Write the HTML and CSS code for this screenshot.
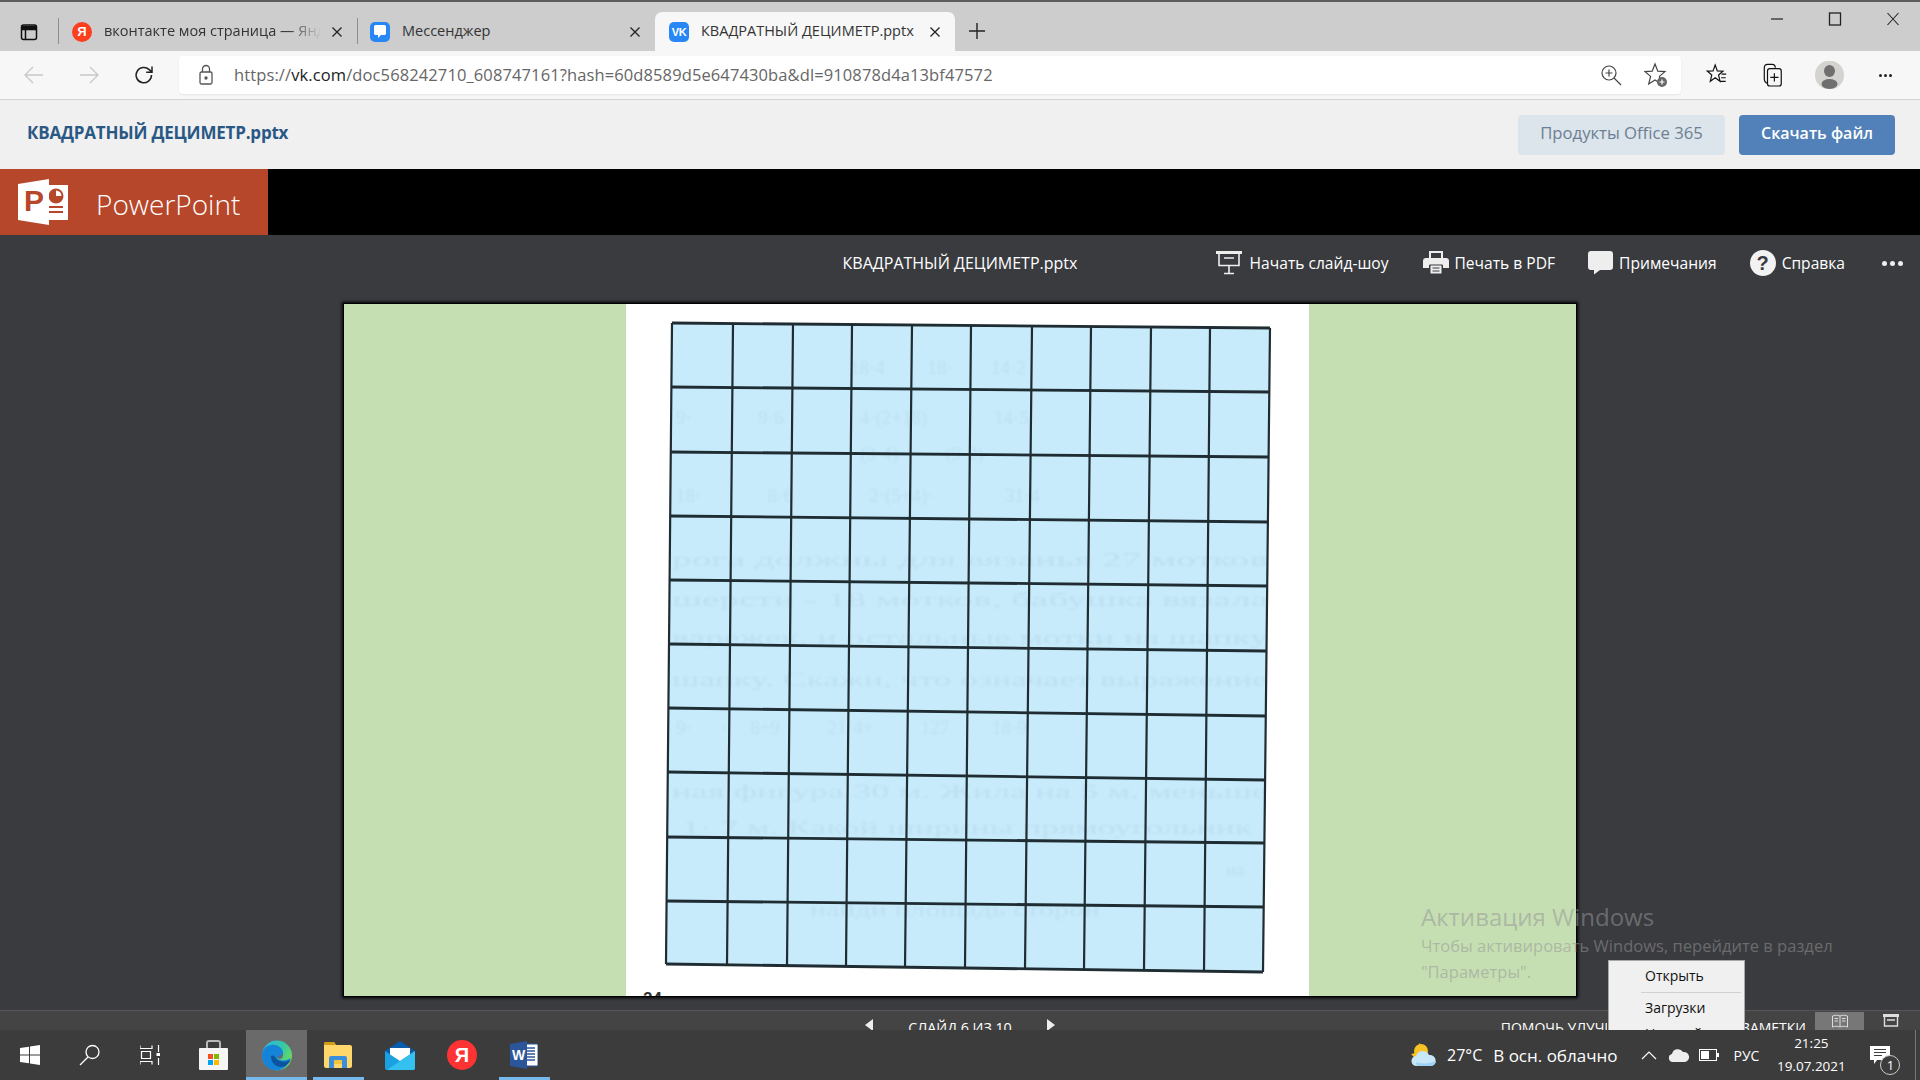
FILE: index.html
```html
<!DOCTYPE html>
<html lang="ru">
<head>
<meta charset="utf-8">
<title>КВАДРАТНЫЙ ДЕЦИМЕТР.pptx</title>
<link rel="stylesheet" href="styles.css">
</head>
<body>
<div class="window">
  <header class="tabbar">
    <div class="tab-side">
      <svg width="20" height="20" viewBox="0 0 20 20" fill="none" stroke="#111" stroke-width="1.5"><rect x="2.5" y="3" width="15" height="14.5" rx="2"/><path d="M3 4.5h14v3H3z" fill="#111"/><path d="M6.5 7v10"/></svg>
    </div>
    <div class="tab tab-first">
      <span class="fav fav-ya">Я</span>
      <span class="tab-title fade">вконтакте моя страница — Яндекс</span>
      <svg class="tab-x" width="12" height="12" viewBox="0 0 12 12" stroke="#222" stroke-width="1.3"><path d="M1.5 1.5l9 9M10.5 1.5l-9 9"/></svg>
    </div>
    <div class="tab tab-second">
      <span class="fav fav-msg"><svg width="14" height="15" viewBox="0 0 14 15" fill="#fff"><path d="M2.5 1h9A1.5 1.5 0 0 1 13 2.5v7A1.5 1.5 0 0 1 11.500 11H8l-3 3v-3H2.500A1.500 1.500 0 0 1 1 9.500v-7A1.500 1.500 0 0 1 2.500 1z"/></svg></span>
      <span class="tab-title">Мессенджер</span>
      <svg class="tab-x" width="12" height="12" viewBox="0 0 12 12" stroke="#222" stroke-width="1.3"><path d="M1.5 1.5l9 9M10.5 1.5l-9 9"/></svg>
    </div>
    <div class="tab tab-active">
      <span class="fav fav-vk">VK</span>
      <span class="tab-title">КВАДРАТНЫЙ ДЕЦИМЕТР.pptx</span>
      <svg class="tab-x" width="12" height="12" viewBox="0 0 12 12" stroke="#222" stroke-width="1.3"><path d="M1.5 1.5l9 9M10.5 1.5l-9 9"/></svg>
    </div>
    <button class="tab-new"><svg width="18" height="18" viewBox="0 0 18 18" stroke="#222" stroke-width="1.4"><path d="M9 1v16M1 9h16"/></svg></button>
    <div class="win-controls">
      <svg width="14" height="14" viewBox="0 0 14 14" stroke="#222" stroke-width="1.2"><path d="M1 7h12"/></svg>
      <svg width="14" height="14" viewBox="0 0 14 14" stroke="#222" stroke-width="1.3" fill="none"><rect x="1.500" y="1" width="11" height="12"/></svg>
      <svg width="14" height="14" viewBox="0 0 14 14" stroke="#222" stroke-width="1.1"><path d="M1.500 1l11 12M12.500 1l-11 12"/></svg>
    </div>
  </header>

  <nav class="toolbar">
    <div class="nav-btn"><svg width="22" height="22" viewBox="0 0 22 22" fill="none" stroke="#c9c9c9" stroke-width="1.400"><path d="M20 11H2M10 3l-8 8 8 8"/></svg></div>
    <div class="nav-btn"><svg width="22" height="22" viewBox="0 0 22 22" fill="none" stroke="#c9c9c9" stroke-width="1.400"><path d="M2 11h18M12 3l8 8-8 8"/></svg></div>
    <div class="nav-btn"><svg width="22" height="22" viewBox="0 0 22 22" fill="none" stroke="#222" stroke-width="1.500"><path d="M18.500 11a7.700 7.700 0 1 1-2.300-5.400L19 8.300M19 2.500v5.800h-5.800"/></svg></div>
    <div class="address">
      <svg class="lock" width="20" height="22" viewBox="0 0 20 22" fill="none" stroke="#555" stroke-width="1.300"><rect x="4" y="8" width="12" height="12" rx="1.500"/><path d="M6.500 8V5a3.500 3.500 0 0 1 7 0v3"/><circle cx="10" cy="14" r="1" fill="#555"/></svg>
      <span class="url">https://<b>vk.com</b>/doc568242710_608747161?hash=60d8589d5e647430ba&amp;dl=910878d4a13bf47572</span>
      <span class="grow"></span>
      <svg class="addr-icon" width="24" height="24" viewBox="0 0 24 24" fill="none" stroke="#444" stroke-width="1.200"><circle cx="10" cy="10" r="7"/><path d="M15 15l7 7M10 6.500v7M6.500 10h7"/></svg>
      <svg class="addr-icon addr-star" width="24" height="26" viewBox="0 0 24 26" fill="none" stroke="#444" stroke-width="1.200"><path d="M11 2l2.800 7.200 7.200.4-5.600 4.800 1.900 7.500L11 18l-6.300 3.900 1.900-7.500L1 9.600l7.200-.4z"/><circle cx="18" cy="20" r="5" fill="#666" stroke="none"/><path d="M18 17.500v5M15.500 20h5" stroke="#fff"/></svg>
    </div>
    <div class="tool-icons">
      <div class="tool-btn"><svg width="22" height="24" viewBox="0 0 24 26" fill="none" stroke="#111" stroke-width="1.300"><path d="M10 2l2.300 6.500 6.200.3-4.800 4.200 1.600 6.800L10 16l-5.300 3.800 1.600-6.800L1.500 8.800l6.200-.3z"/><path d="M17 12h5M16.500 16h5M15.500 20h6"/></svg></div>
      <div class="tool-btn"><svg width="22" height="26" viewBox="0 0 24 28" fill="none" stroke="#111" stroke-width="1.300"><path d="M6 23C3 22 2.500 20 2.500 18V6c0-2 1-3.500 3.500-3.500h5c2 0 3.500 1 3.500 3.500"/><rect x="6" y="7" width="15" height="19" rx="2.500" fill="#f7f7f7"/><path d="M13.500 12v9M9 16.500h9"/></svg></div>
      <div class="tool-btn"><span class="avatar"><svg width="29" height="28" viewBox="0 0 29 28"><circle cx="14.500" cy="14" r="14.500" fill="#d4d3cf"/><ellipse cx="14.500" cy="10" rx="5.500" ry="6" fill="#6f6f6f"/><ellipse cx="14.500" cy="23" rx="8" ry="5" fill="#6f6f6f"/></svg></span></div>
      <div class="tool-btn tool-dots"><i></i><i></i><i></i></div>
    </div>
  </nav>

  <section class="doc-head">
    <h1 class="doc-name">КВАДРАТНЫЙ ДЕЦИМЕТР.pptx</h1>
    <div class="doc-actions">
      <a class="btn btn-light">Продукты Office 365</a>
      <a class="btn btn-blue">Скачать файл</a>
    </div>
  </section>

  <section class="brand">
    <div class="brand-tile">
      <svg class="brand-logo" width="50" height="46" viewBox="0 0 50 46">
        <path d="M21 6h29v35H21z" fill="#fff"/>
        <circle cx="38" cy="17" r="7.500" fill="#b7472a"/>
        <path d="M38 11.500a5.500 5.500 0 0 1 5.500 5.500H38z" fill="#fff"/>
        <path d="M27 27h18v2H27zM27 32h18v2H27z" fill="#b7472a"/>
        <path d="M0 5l31-5v46L0 41z" fill="#fff"/>
        <text x="6" y="32" class="logo-p">P</text>
      </svg>
      <span class="brand-name">PowerPoint</span>
    </div>
  </section>

  <section class="ppt-bar">
    <span></span>
    <span class="ppt-title">КВАДРАТНЫЙ ДЕЦИМЕТР.pptx</span>
    <div class="ppt-actions">
      <div class="ppt-item ppt-first"><svg width="26" height="24" viewBox="0 0 26 24" fill="none" stroke="#eee" stroke-width="1.600"><path d="M0 1.500h26" stroke-width="3"/><path d="M3 2.500v12h20v-12M8 7h10M13 15v7M8 22.500h10"/></svg><span>Начать слайд-шоу</span></div>
      <div class="ppt-item"><svg width="26" height="24" viewBox="0 0 26 24"><rect x="7" y="1" width="12" height="9" fill="none" stroke="#eee" stroke-width="2"/><path d="M3 7h20a3 3 0 0 1 3 3v7h-6v-3H6v3H0v-7a3 3 0 0 1 3-3z" fill="#eee"/><rect x="7" y="14" width="12" height="9" fill="#eee" stroke="#3a3b3f"/><path d="M9.500 17h7M9.500 20h7" stroke="#3a3b3f"/></svg><span>Печать в PDF</span></div>
      <div class="ppt-item"><svg width="25" height="24" viewBox="0 0 25 24" fill="#eee"><path d="M3 0h19a3 3 0 0 1 3 3v13a3 3 0 0 1-3 3H12l-6 4.500V19H3a3 3 0 0 1-3-3V3a3 3 0 0 1 3-3z"/></svg><span>Примечания</span></div>
      <div class="ppt-item"><span class="help">?</span><span>Справка</span></div>
      <div class="ppt-dots"><i></i><i></i><i></i></div>
    </div>
  </section>

  <main class="stage">
    <div class="slide">
      <div class="slide-side slide-left"></div>
      <svg class="slide-page" width="683" height="692" viewBox="626 304 683 692">
        <defs><clipPath id="gridclip"><path d="M672 323L1270 328 1263 972 666 964z"/></clipPath></defs>
        <rect x="626" y="304" width="683" height="692" fill="#fff"/>
        <path d="M672 323L1270 328 1263 972 666 964z" fill="#c8ebfb"/>
        <g clip-path="url(#gridclip)" class="ghost">
          <text x="850" y="374">18·4         18·        14·2</text>
          <text x="676" y="424">9·              9·6                4·(2+18)              14·5</text>
          <text x="860" y="460">(3·4)          (9·2)</text>
          <text x="676" y="502">18·              8·6                2·(5+4)·               31·4</text>
          <text x="672" y="566" textLength="596" lengthAdjust="spacingAndGlyphs">рога должны для вязанья 27 мотков</text>
          <text x="672" y="606" textLength="596" lengthAdjust="spacingAndGlyphs">шерсти - 18 мотков, бабушка вязала</text>
          <text x="672" y="644" textLength="596" lengthAdjust="spacingAndGlyphs">варежек, и остальные мотки на шапку</text>
          <text x="672" y="686" textLength="596" lengthAdjust="spacingAndGlyphs">шапку. Скажи, что означает выражение</text>
          <text x="676" y="734">9·      ·     8+9          21·4+          127         18·9</text>
          <text x="672" y="798" textLength="596" lengthAdjust="spacingAndGlyphs">ная фигура 30 м. Жила на 5 м. меньше</text>
          <text x="682" y="834" textLength="570" lengthAdjust="spacingAndGlyphs">1· 7 м. Какой ширины прямоугольник</text>
          <text x="1226" y="876">на</text>
          <text x="810" y="916" textLength="290" lengthAdjust="spacingAndGlyphs">найди площадь сторон</text>
        </g>
        <g class="grid">
          <path class="grid-v" d="M672 323L666 964M733 324L727 965M793 324L787 966M852 325L846 967M912 325L905 968M971 326L965 968M1032 326L1025 969M1091 327L1084 970M1151 327L1144 970M1210 328L1204 971M1270 328L1263 972"/>
          <path class="grid-h" d="M672 323L1270 328M671 387L1269 392M671 452L1268 457M670 516L1268 522M670 580L1267 586M669 644L1266 651M668 708L1266 716M668 772L1265 780M667 837L1264 843M667 901L1264 907M666 964L1263 972"/>
        </g>
        <text x="643" y="1004" class="page-num">24</text>
      </svg>
      <div class="slide-side slide-right"></div>
    </div>
  </main>

  <footer class="status">
    <span></span>
    <div class="status-pager">
      <svg width="8" height="12" viewBox="0 0 8 12" fill="#eee"><path d="M8 0v12L0 6z"/></svg>
      <span>СЛАЙД 6 ИЗ 10</span>
      <svg width="8" height="12" viewBox="0 0 8 12" fill="#eee"><path d="M0 0v12l8-6z"/></svg>
    </div>
    <div class="status-right">
      <span class="status-help">ПОМОЧЬ УЛУЧШИТЬ OFFICE</span>
      <span class="status-notes">ЗАМЕТКИ</span>
      <span class="view-btn view-on"><svg width="16" height="14" viewBox="0 0 16 14" fill="none" stroke="#ddd"><path d="M8 2C6 1 3 1 .5 2v11c2.500-1 5.500-1 7.500 0 2-1 5-1 7.500 0V2C13 1 10 1 8 2zM8 2v11M2.500 4.500h3.500M2.500 7h3.500M10 4.500h3.500M10 7h3.500"/></svg></span>
      <span class="view-btn"><svg width="16" height="14" viewBox="0 0 16 14" fill="none" stroke="#ddd" stroke-width="1.400"><path d="M0 1.500h16" stroke-width="3"/><path d="M1.500 3v9h13V3M4 6h8"/></svg></span>
    </div>
  </footer>

  <div class="watermark">
    <div class="wm-title">Активация Windows</div>
    <div class="wm-text">Чтобы активировать Windows, перейдите в раздел</div>
    <div class="wm-text">"Параметры".</div>
  </div>

  <div class="context-menu">
    <div class="menu-item">Открыть</div>
    <div class="menu-sep"></div>
    <div class="menu-item">Загрузки</div>
    <div class="menu-item">Настройки</div>
  </div>

  <footer class="taskbar">
    <div class="task-btn task-narrow">
      <svg width="20" height="20" viewBox="0 0 20 20" fill="#fff"><path d="M0 3l9-1.300V9.500H0zM10 1.500L20 0v9.500H10zM0 10.500h9v7.800L0 17zM10 10.500h10V20l-10-1.500z"/></svg>
    </div>
    <div class="task-btn task-narrow">
      <svg width="22" height="22" viewBox="0 0 22 22" fill="none" stroke="#fff" stroke-width="1.300"><circle cx="13.500" cy="8" r="6.500"/><path d="M9 13L1 21"/></svg>
    </div>
    <div class="task-btn task-narrow">
      <svg width="20" height="20" viewBox="0 0 20 20" fill="none" stroke="#fff" stroke-width="1.200"><path d="M0 .500v3h12v-3M0 19.500v-3h12v3M1.500 6.500h9v7h-9zM18.500 0v7M18.500 13v7"/><rect x="16.500" y="8" width="4" height="3" fill="#fff" stroke="none"/></svg>
    </div>
    <div class="task-btn task-store">
      <svg width="29" height="30" viewBox="0 0 29 30"><path d="M8 9V3a2 2 0 0 1 2-2h9a2 2 0 0 1 2 2v6" fill="none" stroke="#b9b9b9" stroke-width="2"/><path d="M1 8h27a1 1 0 0 1 1 1v20a1 1 0 0 1-1 1H1a1 1 0 0 1-1-1V9a1 1 0 0 1 1-1z" fill="#f5f5f5"/><path d="M9 14h5v5H9z" fill="#f25022"/><path d="M15 14h5v5h-5z" fill="#7fba00"/><path d="M9 20h5v5H9z" fill="#00a4ef"/><path d="M15 20h5v5h-5z" fill="#ffb900"/></svg>
    </div>
    <div class="task-btn task-app task-on task-edge">
      <svg width="30" height="31" viewBox="0 0 30 31">
        <defs>
          <linearGradient id="edgeg" x1="0" y1="0" x2="1" y2=".6"><stop offset="0" stop-color="#2fb5e6"/><stop offset=".6" stop-color="#35c6a5"/><stop offset="1" stop-color="#6edb5b"/></linearGradient>
        </defs>
        <circle cx="15" cy="15.500" r="15" fill="url(#edgeg)"/>
        <path d="M0 15.500C0 8 7 4 13 5c6 1 9 6 8 10-.5 2-2 3-4 3-1 0-2 0-2.500-.5 2 3 8 4 12 1.500 1-.7 2-1 2-.5-2 7-8 12-14 12C6 30 0 24 0 15.500z" fill="#1584d8"/>
        <path d="M9 16c0 7 5 11 10 11 4 0 8-3 10-7.500-3 2.500-9 3-13 .5-4-2.500-3-6-7-4z" fill="#0c53a0"/>
        <path d="M15 17c2-.4 4-1 5-4 2 3 0 6-2 6-1 0-2-1-3-2z" fill="#6a6a6a"/>
      </svg>
    </div>
    <div class="task-btn task-app task-on">
      <svg width="28" height="26" viewBox="0 0 28 26"><path d="M0 2a2 2 0 0 1 2-2h8l2 3h14a2 2 0 0 1 2 2v19a2 2 0 0 1-2 2H2a2 2 0 0 1-2-2z" fill="#ffd76b"/><path d="M0 2a2 2 0 0 1 2-2h8l2 3H0z" fill="#d49b16"/><path d="M5 26V16a2 2 0 0 1 2-2h14a2 2 0 0 1 2 2v10h-5v-6h-8v6z" fill="#3a8fdd"/><path d="M10 18h8v4h-8z" fill="#f2c43a"/></svg>
    </div>
    <div class="task-btn task-app">
      <svg width="30" height="29" viewBox="0 0 30 29"><path d="M15 0l15 10v1L15 20 0 11v-1z" fill="#0a5cad"/><path d="M5 7h20v9L15 22 5 16z" fill="#fff"/><path d="M0 10l15 10L30 10v17a2 2 0 0 1-2 2H2a2 2 0 0 1-2-2z" fill="#1ba1e2"/><path d="M30 10v17a2 2 0 0 1-2 2H2z" fill="#34c1f0"/></svg>
    </div>
    <div class="task-btn task-app"><span class="ya-circle">Я</span></div>
    <div class="task-btn task-app task-on">
      <svg width="28" height="28" viewBox="0 0 28 28"><path d="M14 3h13a1 1 0 0 1 1 1v20a1 1 0 0 1-1 1H14z" fill="#fff" stroke="#2b579a"/><path d="M17 7h8M17 10h8M17 13h8M17 16h8M17 19h8" stroke="#2b579a" stroke-width="1.500"/><path d="M0 3l17-3v28L0 25z" fill="#2b579a"/><text x="2" y="19" class="word-w">W</text></svg>
    </div>
    <div class="tray">
      <svg class="tray-weather" width="28" height="24" viewBox="0 0 28 24"><circle cx="12" cy="8" r="7" fill="#f7c325"/><path d="M2 11a9 9 0 0 0 6 4l4-9c1-2 0-5-2-6 2 5-3 11-8 11z" fill="#f7c325"/><path d="M8 23a5 5 0 0 1-1-10 7 7 0 0 1 13-1 5.500 5.500 0 0 1 2 11z" fill="#c8e8fa"/><path d="M8 23a5 5 0 0 1-1-4c4 2 14 2 20-1a5.500 5.500 0 0 1-5 5z" fill="#9fd3f2"/></svg>
      <span class="tray-temp">27°C</span>
      <span class="tray-desc">В осн. облачно</span>
      <svg class="tray-chev" width="16" height="10" viewBox="0 0 16 10" fill="none" stroke="#fff" stroke-width="1.200"><path d="M1 9l7-7 7 7"/></svg>
      <svg class="tray-cloud" width="22" height="14" viewBox="0 0 22 14" fill="#eee"><path d="M5 14a4 4 0 0 1-1-7.900A6 6 0 0 1 15 4a5 5 0 0 1 2 10z"/></svg>
      <svg class="tray-batt" width="20" height="12" viewBox="0 0 20 12"><rect x=".5" y=".5" width="17" height="11" fill="none" stroke="#fff"/><rect x="2" y="2" width="8" height="8" fill="#fff"/><rect x="18" y="4" width="2" height="4" fill="#fff"/></svg>
      <span class="tray-lang">РУС</span>
      <div class="tray-clock"><span>21:25</span><span>19.07.2021</span></div>
      <div class="tray-note">
        <svg width="20" height="18" viewBox="0 0 20 18" fill="#fff"><path d="M0 0h20v14h-13l-3 4v-4H0z"/><path d="M4 3.500h12M4 6.500h12M4 9.500h8" stroke="#3c3c3c"/></svg>
        <span class="note-badge">1</span>
      </div>
      <span class="tray-desktop"></span>
    </div>
  </footer>
</div>
</body>
</html>
```
FILE: styles.css
```css
* { box-sizing: border-box; }
html, body { margin: 0; padding: 0; height: 100%; overflow: hidden; }
body { font-family: "Open Sans", "Noto Sans", sans-serif; color: #222; background: #3a3b3f; }
.window { position: relative; width: 1920px; height: 1080px; display: flex; flex-direction: column; overflow: hidden; }

/* tabs */
.tabbar { flex: none; height: 51px; border-top: 2px solid #5c5c5c; background: #cdcdcd; display: flex; align-items: flex-end; position: relative; }
.tab-side { width: 58px; height: 39px; display: flex; align-items: center; justify-content: center; }
.tab { height: 39px; display: flex; align-items: center; position: relative; font-size: 14.500px; }
.tab-first { width: 299px; padding-left: 14px; }
.tab-second { width: 298px; padding-left: 13px; }
.tab-active { width: 300px; padding-left: 14px; background: #f7f7f7; border-radius: 7px 7px 0 0; }
.tab-first::before, .tab-second::before { content: ""; position: absolute; left: 0; top: 6px; height: 26px; width: 1px; background: #8e8e8e; }
.fav { flex: none; width: 20px; height: 20px; display: flex; align-items: center; justify-content: center; color: #fff; }
.fav-ya { border-radius: 50%; background: #fc3f1d; font: 700 13px "Liberation Sans", sans-serif; }
.fav-msg, .fav-vk { border-radius: 5px; background: #2787f5; }
.fav-vk { font: 700 11px "Liberation Sans", sans-serif; letter-spacing: -.5px; }
.tab-title { margin-left: 12px; padding-bottom: 2px; flex: 1; min-width: 0; white-space: nowrap; overflow: hidden; color: #333; }
.tab-x { flex: none; margin: 0 14px 0 10px; }
.fade { -webkit-mask-image: linear-gradient(90deg, #000 85%, transparent 100%); mask-image: linear-gradient(90deg, #000 85%, transparent 100%); }
.tab-new { border: 0; background: none; padding: 0; margin: 0 0 11px 13px; width: 18px; height: 18px; display: block; }
.win-controls { margin-left: auto; align-self: flex-start; display: flex; gap: 44px; padding: 10px 20px 0 0; }

/* address */
.toolbar { flex: none; height: 49px; background: #f7f7f7; border-bottom: 1px solid #d2d2d2; display: flex; align-items: flex-start; padding-left: 6px; }
.nav-btn { flex: none; width: 55px; height: 48px; display: flex; align-items: center; justify-content: center; }
.address { flex: none; width: 1502px; height: 38px; margin: 5px 0 0 8px; background: #fff; border-radius: 4px; box-shadow: 0 1px 2px rgba(0,0,0,.08); display: flex; align-items: center; padding: 0 13px 0 17px; }
.lock { flex: none; }
.url { margin-left: 18px; padding-bottom: 2px; font-size: 16.500px; color: #666; white-space: nowrap; letter-spacing: .11px; }
.url b { font-weight: 400; color: #222; }
.grow { flex: 1; }
.addr-star { margin-left: 21px; }
.tool-icons { display: flex; margin-left: 8px; }
.tool-btn { width: 56px; height: 48px; display: flex; align-items: center; justify-content: center; }
.avatar { display: block; width: 29px; height: 28px; }
.tool-dots { gap: 2px; }
.tool-dots i { width: 3px; height: 3px; border-radius: 50%; background: #222; }

/* doc header */
.doc-head { flex: none; height: 69px; background: #f0f0f0; display: flex; align-items: center; justify-content: space-between; padding: 0 25px 0 27px; }
.doc-name { margin: 0 0 5px; font-size: 17px; font-weight: 700; color: #2a5885; letter-spacing: -.2px; }
.doc-actions { display: flex; gap: 14px; }
.btn { height: 40px; border-radius: 4px; display: flex; align-items: center; justify-content: center; font-size: 16px; padding-bottom: 4px; }
.btn-light { width: 207px; background: #dce4ec; color: #6d7f92; font-size: 16.700px; }
.btn-blue { width: 156px; background: #5181b8; color: #fff; font-weight: 600; }

/* powerpoint */
.brand { flex: none; height: 66px; background: #000; }
.brand-tile { width: 268px; height: 66px; background: #b7472a; display: flex; align-items: center; padding-left: 18px; color: #fff; }
.brand-logo { flex: none; }
.logo-p { font: 700 30px "Liberation Sans", sans-serif; fill: #b7472a; }
.brand-name { margin-left: 28px; padding-top: 3px; font-size: 28px; font-weight: 300; color: #fff; }
.ppt-bar { flex: none; height: 56px; background: #3a3b3f; display: grid; grid-template-columns: minmax(0, 1fr) auto minmax(0, 1fr); align-items: center; color: #fff; font-size: 15.600px; padding: 0 17px; }
.ppt-title { white-space: nowrap; font-size: 16px; }
.ppt-actions { display: flex; align-items: center; justify-content: flex-end; gap: 33px; }
.ppt-item { display: flex; align-items: center; gap: 6px; white-space: nowrap; }
.ppt-item svg { flex: none; }
.ppt-first { gap: 8px; margin-right: 1px; }
.help { width: 26px; height: 26px; border-radius: 50%; background: #f2f2f2; color: #3a3b3f; font: 700 20px/26px "Liberation Sans", sans-serif; text-align: center; }
.ppt-dots { display: flex; gap: 3px; margin-left: 4px; }
.ppt-dots i { width: 5px; height: 5px; border-radius: 50%; background: #eee; }

/* slide */
.stage { flex: 1; min-height: 0; background: #3a3b3f; display: flex; justify-content: center; align-items: flex-start; padding-top: 12px; }
.slide { width: 1234px; height: 694px; display: flex; border: 1px solid #000; box-shadow: 0 0 3px 1px #000; background: #c5dfb3; overflow: hidden; }
.slide-side { background: #c5dfb3; }
.slide-left { width: 282px; }
.slide-right { flex: 1; }
.slide-page { display: block; flex: none; }
.grid path { fill: none; stroke: #1f2c32; }
.grid-v { stroke-width: 2.200; }
.grid-h { stroke-width: 2.800; }
.grid { filter: blur(.4px); }
.ghost { font: 19px "Liberation Serif", serif; fill: #6e9ab3; opacity: .12; filter: blur(1.300px); }
.ghost text { white-space: pre; }
.page-num { font: 700 17px "Liberation Sans", sans-serif; fill: #333; }

/* status */
.status { flex: none; height: 20px; background: #444; border-top: 1px solid #575757; display: grid; grid-template-columns: minmax(0, 1fr) auto minmax(0, 1fr); color: #fff; font-size: 14px; overflow: hidden; }
.status-pager { display: flex; align-items: flex-start; gap: 35px; line-height: 19px; padding-top: 7px; font-size: 14.300px; }
.status-pager svg { flex: none; margin-top: 1px; }
.status-right { display: flex; justify-content: flex-end; align-items: flex-start; padding: 7px 5px 0 0; line-height: 19px; white-space: nowrap; }
.status-help { flex: none; width: 106px; overflow: hidden; }
.status-notes { flex: none; margin-left: 135px; }
.view-btn { flex: none; width: 49px; height: 18px; margin-top: -6px; display: flex; align-items: center; justify-content: center; }
.view-on { margin-left: 9px; background: #777; }
.view-btn:last-child { margin-left: 2px; }

/* overlays */
.watermark { position: absolute; left: 1421px; top: 901px; color: rgba(150,150,150,.55); z-index: 3; pointer-events: none; }
.wm-title { font-size: 24px; line-height: 32px; }
.wm-text { font-size: 16.550px; line-height: 25.500px; }
.context-menu { position: absolute; left: 1608px; top: 960px; width: 137px; height: 70px; overflow: hidden; background: #f0f0f0; border: 1px solid #a8a8a8; border-bottom: 0; z-index: 4; font-size: 14px; color: #111; padding-left: 36px; }
.menu-item { height: 27px; line-height: 30px; white-space: nowrap; }
.menu-item:last-child { margin-top: -1px; }
.menu-sep { height: 1px; margin: 4px 3px 0 -4px; background: #d0d0d0; }

/* taskbar */
.taskbar { flex: none; height: 50px; background: #3c3c3c; display: flex; position: relative; z-index: 5; color: #fff; }
.task-btn { flex: none; display: flex; align-items: center; justify-content: center; height: 50px; position: relative; }
.task-narrow { width: 60px; }
.task-store { width: 66px; }
.task-app { width: 62px; }
.task-edge { width: 61px; background: #6a6a6a; }
.task-on::after { content: ""; position: absolute; left: 6px; right: 5px; bottom: 0; height: 3px; background: #76b9ed; }
.task-edge::after { left: 0; right: 0; }
.ya-circle { width: 30px; height: 30px; border-radius: 50%; background: #ff3333; color: #fff; font: 700 20px/30px "Liberation Sans", sans-serif; text-align: center; }
.word-w { font: 700 14px "Liberation Sans", sans-serif; fill: #fff; }
.tray { margin-left: auto; width: 511px; display: flex; align-items: center; font-size: 16px; white-space: nowrap; }
.tray-weather { flex: none; }
.tray-temp { margin-left: 10px; }
.tray-desc { margin-left: 11px; font-size: 17px; }
.tray-chev { flex: none; margin-left: 24px; }
.tray-cloud { flex: none; margin-left: 11px; }
.tray-batt { flex: none; margin-left: 9px; }
.tray-lang { margin-left: 14px; font-size: 14px; }
.tray-clock { width: 70px; margin-left: 17px; display: flex; flex-direction: column; align-items: center; font-size: 13.500px; line-height: 23px; }
.tray-note { position: relative; width: 40px; margin-left: 20px; height: 50px; display: flex; align-items: center; padding-left: 4px; }
.note-badge { position: absolute; left: 14px; top: 25px; width: 20px; height: 20px; border-radius: 50%; border: 1px solid #ccc; background: #3c3c3c; font-size: 13px; line-height: 18px; text-align: center; }
.tray-desktop { flex: none; width: 1px; height: 50px; margin-left: 9px; background: #777; }
```
